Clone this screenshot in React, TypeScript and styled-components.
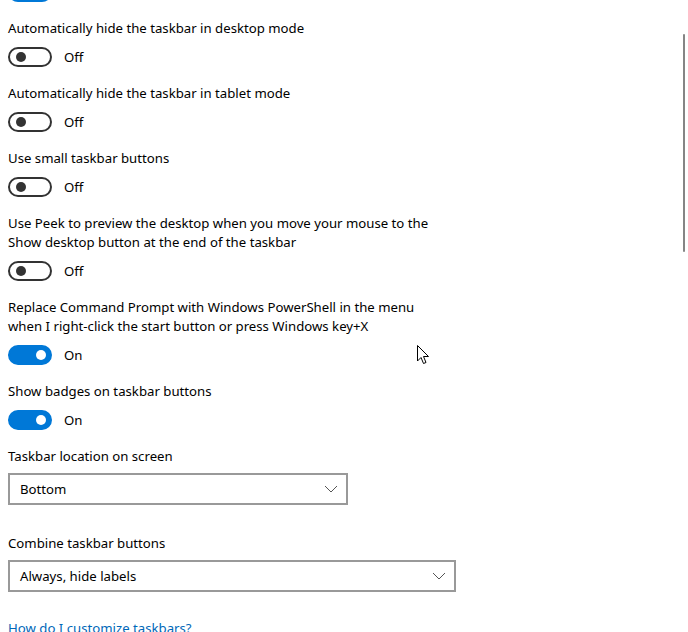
import React from "react";
import styled, { createGlobalStyle } from "styled-components";

const Global = createGlobalStyle`
  html, body { margin: 0; padding: 0; background: #fff; }
  body { font-family: "Noto Sans", "Open Sans", sans-serif; color: #000; overflow: hidden; }
  * { box-sizing: border-box; }
`;

const Page = styled.div`
  position: relative;
  width: 688px;
  height: 632px;
  overflow: hidden;
  background: #fff;
`;

const Content = styled.div`
  display: flex;
  flex-direction: column;
  padding-left: 8px;
  margin-top: -18px;
`;

const Item = styled.div`
  display: flex;
  flex-direction: column;
  gap: 10px;
  margin-bottom: 16px;
`;

const Label = styled.div`
  font-size: 13.2px;
  line-height: 19px;
  white-space: nowrap;
  padding-top: 1px;
  margin-bottom: -1px;
`;

const ToggleRow = styled.div`
  display: flex;
  align-items: center;
  gap: 12px;
  height: 20px;
`;

const Track = styled.div<{ $on: boolean }>`
  position: relative;
  width: 44px;
  height: 20px;
  border-radius: 10px;
  background: ${(p) => (p.$on ? "#0078d7" : "#fff")};
  border: 2px solid ${(p) => (p.$on ? "#0078d7" : "#333")};
`;

const Knob = styled.div<{ $on: boolean }>`
  position: absolute;
  top: 3px;
  left: ${(p) => (p.$on ? "26px" : "6px")};
  width: 10px;
  height: 10px;
  border-radius: 50%;
  background: ${(p) => (p.$on ? "#fff" : "#333")};
`;

const State = styled.span`
  font-size: 13.2px;
  line-height: 19px;
`;

const SelectGroup = styled.div`
  display: flex;
  flex-direction: column;
  gap: 8px;
  margin-bottom: 28px;
`;

const Select = styled.div<{ $w: number }>`
  display: flex;
  align-items: center;
  justify-content: space-between;
  width: ${(p) => p.$w}px;
  height: 32px;
  border: 2px solid #999;
  padding: 0 8px 0 10px;
  font-size: 13.2px;
`;

const Link = styled.a`
  font-size: 13.2px;
  line-height: 19px;
  color: #0067b8;
  text-decoration: none;
  margin-top: -1px;
`;

const Scrollbar = styled.div`
  position: absolute;
  left: 683px;
  top: 34px;
  width: 2px;
  height: 218px;
  background: #858585;
  border-radius: 1px;
`;

const Cursor = styled.svg`
  position: absolute;
  left: 417px;
  top: 345px;
`;

function Toggle({ on }: { on: boolean }) {
  return (
    <ToggleRow>
      <Track $on={on}>
        <Knob $on={on} />
      </Track>
      <State>{on ? "On" : "Off"}</State>
    </ToggleRow>
  );
}

const Chevron = () => (
  <svg width="14" height="8" viewBox="0 0 14 8">
    <path d="M1 1 L7 7 L13 1" fill="none" stroke="#555" strokeWidth="1" />
  </svg>
);

const items: { label: React.ReactNode; on: boolean }[] = [
  { label: "Automatically hide the taskbar in desktop mode", on: false },
  { label: "Automatically hide the taskbar in tablet mode", on: false },
  { label: "Use small taskbar buttons", on: false },
  {
    label: (
      <>
        Use Peek to preview the desktop when you move your mouse to the
        <br />
        Show desktop button at the end of the taskbar
      </>
    ),
    on: false,
  },
  {
    label: (
      <>
        Replace Command Prompt with Windows PowerShell in the menu
        <br />
        when I right-click the start button or press Windows key+X
      </>
    ),
    on: true,
  },
  { label: "Show badges on taskbar buttons", on: true },
];

export default function App() {
  return (
    <Page>
      <Global />
      <Content>
        <Item>
          <Toggle on={true} />
        </Item>
        {items.map((it, i) => (
          <Item key={i}>
            <Label>{it.label}</Label>
            <Toggle on={it.on} />
          </Item>
        ))}
        <SelectGroup>
          <Label>Taskbar location on screen</Label>
          <Select $w={340}>
            <span>Bottom</span>
            <Chevron />
          </Select>
        </SelectGroup>
        <SelectGroup>
          <Label>Combine taskbar buttons</Label>
          <Select $w={448}>
            <span>Always, hide labels</span>
            <Chevron />
          </Select>
        </SelectGroup>
        <Link href="#">How do I customize taskbars?</Link>
      </Content>
      <Scrollbar />
      <Cursor width="13" height="20" viewBox="0 0 13 20">
        <path
          d="M0.5 0.5 L0.5 16 L4 12.5 L6.5 18.5 L9 17.5 L6.5 11.5 L11.5 11.5 Z"
          fill="#fff"
          stroke="#000"
          strokeWidth="1"
          strokeLinejoin="miter"
        />
      </Cursor>
    </Page>
  );
}
